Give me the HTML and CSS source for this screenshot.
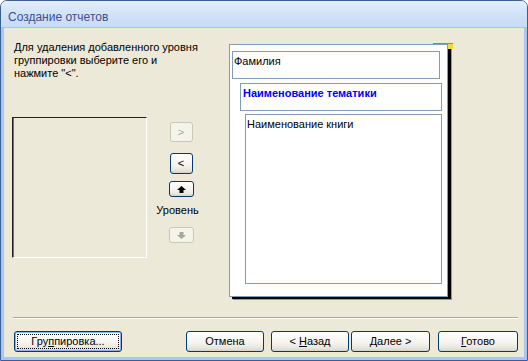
FILE: index.html
```
<!DOCTYPE html>
<html lang="ru">
<head>
    <meta charset="UTF-8">
    <title>Создание отчетов</title>
    <link rel="stylesheet" href="styles.css">
</head>
<body>
    <div class="window">
        <div class="titlebar">Создание отчетов</div>

        <div class="frame">
            <div class="main">
                <div class="left">
                    <p class="hint">Для удаления добавленного уровня<br>группировки выберите его и<br>нажмите "&lt;".</p>

                    <div class="picker">
                        <div class="listbox"></div>

                        <!-- level move buttons -->
                        <div class="movers">
                            <button class="btn-small btn-add" disabled>&gt;</button>
                            <button class="btn-small btn-remove">&lt;</button>
                            <button class="btn-arrow btn-up">
                                <svg width="9" height="7" viewBox="0 0 9 7"><polygon points="4.5,0 9,4 6.5,4 6.5,7 2.5,7 2.5,4 0,4" fill="#000"/></svg>
                            </button>
                            <span class="level-label">Уровень</span>
                            <button class="btn-arrow btn-down" disabled>
                                <svg width="9" height="7" viewBox="0 0 9 7"><polygon points="2.5,0 6.5,0 6.5,3 9,3 4.5,7 0,3 2.5,3" fill="#aca899"/></svg>
                            </button>
                        </div>
                    </div>
                </div>

                <!-- grouping preview -->
                <div class="preview">
                    <div class="page">
                        <div class="group group-1">Фамилия</div>
                        <div class="group group-2">Наименование тематики</div>
                        <div class="group group-3">Наименование книги</div>
                    </div>
                    <span class="corner"></span>
                </div>
            </div>

            <div class="separator"></div>

            <div class="footer">
                <button class="btn btn-group">Гру<u>п</u>пировка...</button>
                <button class="btn btn-cancel">Отмена</button>
                <button class="btn btn-back">&lt; <u>Н</u>азад</button>
                <button class="btn btn-next"><u>Д</u>алее &gt;</button>
                <button class="btn btn-finish"><u>Г</u>отово</button>
            </div>
        </div>
    </div>
</body>
</html>
```

FILE: styles.css
```
* {
    margin: 0;
    padding: 0;
    box-sizing: border-box;
}

body {
    font-family: 'Liberation Sans', Arial, sans-serif;
    font-size: 11px;
    background: #fff;
    color: #000;
}

/* Window frame */
.window {
    width: 528px;
    height: 361px;
    border: 1px solid #3a5f95;
    border-radius: 7px 7px 0 0;
    display: flex;
    flex-direction: column;
    overflow: hidden;
}

.titlebar {
    height: 27px;
    padding: 9px 7px 0;
    font-size: 12px;
    line-height: 14px;
    color: #3d4f8f;
    background: linear-gradient(#e3eefb 0%, #d3e3f8 45%, #c6dbf5 100%);
    border-bottom: 1px solid #a5c4ec;
}

.frame {
    flex: 1;
    display: flex;
    flex-direction: column;
    background: #ece9d8;
    border: 3px solid #a9c5f0;
    border-top: none;
    padding: 0 6px 5px 8px;
}

.main {
    flex: 1;
    display: flex;
}

.left {
    width: 217px;
}

.hint {
    margin: 13px 0 0 2px;
    line-height: 13px;
    white-space: nowrap;
}

/* Level picker */
.picker {
    display: flex;
    margin-top: 37px;
}

.listbox {
    width: 135px;
    height: 141px;
    border: 1px solid;
    border-color: #222 #fff #fff #222;
    box-shadow: inset 1px 0 0 #716f64;
}

.movers {
    width: 48px;
    margin-left: 10px;
    padding-top: 5px;
    display: flex;
    flex-direction: column;
    align-items: center;
}

.btn-small,
.btn-arrow,
.btn {
    font-family: 'Liberation Sans', Arial, sans-serif;
    font-size: 11px;
    line-height: 13px;
    color: #000;
    text-align: center;
    border: 1px solid #003c74;
    border-radius: 3px;
    background: linear-gradient(#fff 0%, #f5f4ef 55%, #e8e6dc 85%, #d6d0c5 100%);
}

.btn-small {
    width: 23px;
    height: 20px;
}

.btn-remove {
    height: 21px;
    margin-top: 11px;
}

.btn-arrow {
    width: 25px;
    height: 16px;
}

.btn-arrow svg {
    display: block;
    margin: 0 auto;
}

.btn-up {
    margin-top: 7px;
}

.btn-down {
    margin-top: 10px;
}

.btn-small:disabled,
.btn-arrow:disabled {
    color: #aca899;
    border-color: #c9c7ba;
    background: #f5f4ea;
}

.level-label {
    margin: 7px 7px 0 0;
    line-height: 13px;
}

/* Report preview */
.preview {
    position: relative;
    width: 219px;
    height: 253px;
    margin-top: 16px;
}

.page {
    position: relative;
    width: 100%;
    height: 100%;
    background: #fff;
    border: 1px solid #7f9db9;
    padding: 6px 0 0 2px;
    box-shadow: 3px 2px 0 0 #000, 4px 3px 0 0 #7f9db9;
}

.group {
    border: 1px solid #7f9db9;
    line-height: 13px;
    padding-top: 3px;
}

.group-1 {
    width: 208px;
    height: 28px;
    padding-left: 1px;
}

.group-2 {
    width: 202px;
    height: 28px;
    margin: 4px 0 0 8px;
    padding-left: 2px;
    font-weight: bold;
    color: #0000ff;
}

.group-3 {
    width: 197px;
    height: 170px;
    margin: 3px 0 0 13px;
    padding-left: 1px;
}

.corner {
    position: absolute;
    top: -1px;
    left: 204px;
    width: 20px;
    height: 6px;
    background: linear-gradient(#f2651a 0 1px, #ffd43f 1px);
    clip-path: polygon(0 0, 100% 0, 100% 100%, 15px 100%, 15px 1px, 0 1px);
}

/* Bottom buttons */
.separator {
    margin-left: 1px;
    border-top: 1px solid #aca899;
    border-bottom: 1px solid #fff;
}

.footer {
    display: flex;
    margin-top: 12px;
    height: 21px;
}

.btn {
    height: 21px;
}

.btn-group {
    width: 108px;
    margin-left: 2px;
    outline: 1px dotted #000;
    outline-offset: -4px;
    box-shadow: inset 0 0 0 1px #8cb0e8;
}

.btn-cancel {
    width: 78px;
    margin-left: auto;
}

.btn-back {
    width: 78px;
    margin-left: 7px;
}

.btn-next {
    width: 79px;
    margin-left: 2px;
}

.btn-finish {
    width: 80px;
    margin-left: 8px;
}
```
